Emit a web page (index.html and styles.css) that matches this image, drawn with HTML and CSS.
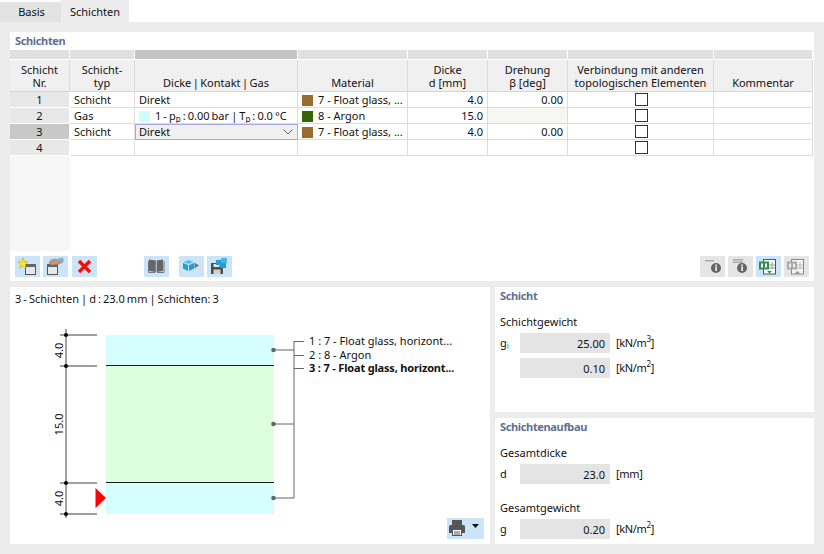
FILE: index.html
```html
<!DOCTYPE html>
<html lang="de">
<head>
<meta charset="utf-8">
<title>Schichten</title>
<link rel="stylesheet" href="styles.css">
</head>
<body>
<nav class="tabs">
  <div class="tab">Basis</div>
  <div class="tab active">Schichten</div>
</nav>
<main class="content">
  <section class="panel top">
    <h2 class="title">Schichten</h2>
    <div class="table-area">
      <table class="grid">
        <colgroup>
          <col class="c1"><col class="c2"><col class="c3"><col class="c4"><col class="c5"><col class="c6"><col class="c7"><col class="c8">
        </colgroup>
        <tr class="strip">
          <td></td><td></td><td class="dark"></td><td></td><td></td><td></td><td></td><td></td>
        </tr>
        <tr class="head">
          <th>Schicht<br>Nr.</th>
          <th>Schicht-<br>typ</th>
          <th class="tight">Dicke | Kontakt | Gas</th>
          <th>Material</th>
          <th>Dicke<br>d [mm]</th>
          <th>Drehung<br>β [deg]</th>
          <th>Verbindung mit anderen<br>topologischen Elementen</th>
          <th>Kommentar</th>
        </tr>
        <tr>
          <td class="nr">1</td><td class="txt">Schicht</td><td class="txt">Direkt</td>
          <td class="txt"><span class="swatch brown"></span>7 - Float glass, ...</td>
          <td class="num">4.0</td><td class="num">0.00</td>
          <td class="chk"><span class="box"></span></td><td></td>
        </tr>
        <tr>
          <td class="nr">2</td><td class="txt">Gas</td>
          <td class="txt tight"><span class="swatch cyan"></span>1 - p<sub>p</sub> : 0.00 bar | T<sub>p</sub> : 0.0 °C</td>
          <td class="txt"><span class="swatch green"></span>8 - Argon</td>
          <td class="num">15.0</td><td class="na"></td>
          <td class="chk"><span class="box"></span></td><td></td>
        </tr>
        <tr>
          <td class="nr sel">3</td><td class="txt">Schicht</td>
          <td class="txt combo"><span>Direkt</span>
            <svg class="chev" width="10" height="6" viewBox="0 0 10 6"><path d="M0.5 0.5 5 5 9.500 0.5" fill="none" stroke="#666"/></svg>
          </td>
          <td class="txt"><span class="swatch brown"></span>7 - Float glass, ...</td>
          <td class="num">4.0</td><td class="num">0.00</td>
          <td class="chk"><span class="box"></span></td><td></td>
        </tr>
        <tr>
          <td class="nr">4</td><td></td><td></td><td></td><td></td><td></td>
          <td class="chk"><span class="box"></span></td><td></td>
        </tr>
      </table>
      <div class="rest"><div class="rest-nr"></div></div>
    </div>
    <div class="toolbar">
      <button class="tb"><svg width="25" height="21" viewBox="0 0 25 21"><rect x="10.500" y="9.500" width="10" height="9" fill="#e8e8e8" stroke="#555"/><rect x="10" y="8" width="11" height="3" fill="#666"/><path d="M8 2 9.400 5.600 13 6 10.300 8.300 11.200 12 8 10 4.800 12 5.700 8.300 3 6 6.600 5.600Z" fill="#ffe81a" stroke="#a89a10" stroke-width=".5"/></svg></button>
      <button class="tb"><svg width="25" height="21" viewBox="0 0 25 21"><rect x="4.500" y="8.500" width="10" height="10" fill="#e8e8e8" stroke="#555"/><rect x="4" y="8" width="11" height="3" fill="#666"/><path d="M6 7 8 4 12 3 17 4 20 6 16 8 11 9 8 9Z" fill="#c09a80" stroke="#8c6f5c" stroke-width=".5"/><path d="M15 2.500 20 1.500 21 5 17 5.500Z" fill="#7fb0d0"/></svg></button>
      <button class="tb gap-del"><svg width="25" height="21" viewBox="0 0 25 21"><path d="M7 5 18 16M18 5 7 16" stroke="#ee1111" stroke-width="3.400" fill="none"/></svg></button>
      <button class="tb gap-book"><svg width="25" height="21" viewBox="0 0 25 21"><path d="M5 3.500 11.800 4.500V16L5 15ZM19 3.500 12.700 4.500V16L19 15Z" fill="#666"/><path d="M4.500 5V16.500H11.500M20 5V16.500H13" fill="none" stroke="#777"/></svg></button>
      <button class="tb gap-cube"><svg width="25" height="21" viewBox="0 0 25 21"><path d="M4 7 9 9V15L4 12.500ZM10 9 15 7V12.500L10 15Z" fill="#1f9fd8"/><path d="M4.500 6 9.500 4 14.500 6 9.500 8Z" fill="#5cc0e8"/><path d="M15.500 6.500 20 9.500 15.500 12.500Z" fill="#777"/></svg></button>
      <button class="tb"><svg width="25" height="21" viewBox="0 0 25 21"><path d="M4 7H14L16 9V18H4Z" fill="#4d4d4d"/><rect x="6.500" y="8" width="6" height="3" fill="#e8e8e8"/><rect x="6.500" y="13.500" width="7" height="4.500" fill="#cfcfcf"/><rect x="9" y="4" width="6" height="5" fill="#1f9fd8"/><rect x="14" y="2" width="6" height="5" fill="#4db4e2"/><rect x="13" y="7" width="6" height="5" fill="#1f9fd8"/></svg></button>
      <span class="spacer"></span>
      <button class="tb off"><svg width="25" height="21" viewBox="0 0 25 21"><rect x="5" y="4" width="9" height="1.500" fill="#aaa"/><circle cx="16" cy="12" r="5" fill="#666"/><rect x="15.200" y="10.500" width="1.800" height="4.500" fill="#e5e5e5"/><rect x="15.200" y="8.500" width="1.800" height="1.500" fill="#e5e5e5"/></svg></button>
      <button class="tb off"><svg width="25" height="21" viewBox="0 0 25 21"><rect x="5" y="3" width="10" height="1.500" fill="#aaa"/><rect x="5" y="5.500" width="10" height="1.500" fill="#aaa"/><circle cx="14" cy="12" r="5" fill="#666"/><rect x="13.200" y="10.500" width="1.800" height="4.500" fill="#e5e5e5"/><rect x="13.200" y="8.500" width="1.800" height="1.500" fill="#e5e5e5"/></svg></button>
      <button class="tb"><svg width="25" height="21" viewBox="0 0 25 21"><rect x="7.500" y="3.500" width="12" height="14.500" fill="#fff" stroke="#555"/><path d="M13 9H19M13 12H19M16 6V13" stroke="#999" fill="none"/><rect x="3" y="5.500" width="10" height="8" fill="#2f8f4f"/><rect x="5" y="7.500" width="2" height="4" fill="#fff"/><rect x="9" y="7.500" width="2" height="4" fill="#fff"/><path d="M11 15h5l-2.500 2.500Z" fill="#2f8f4f"/></svg></button>
      <button class="tb off"><svg width="25" height="21" viewBox="0 0 25 21"><rect x="7.500" y="3.500" width="12" height="14.500" fill="#f4f4f4" stroke="#888"/><path d="M13 9H19M13 12H19M16 6V13" stroke="#bbb" fill="none"/><rect x="3" y="5.500" width="10" height="8" fill="#aaa"/><rect x="5" y="7.500" width="2" height="4" fill="#eee"/><rect x="9" y="7.500" width="2" height="4" fill="#eee"/><path d="M11 17.500h5l-2.500-2.500Z" fill="#888"/></svg></button>
    </div>
  </section>
  <div class="bottom">
    <section class="panel diagram">
      <p class="caption">3 - Schichten | d : 23.0 mm | Schichten: 3</p>
      <svg class="drawing" width="480" height="208" viewBox="0 310 480 208">
        <rect x="96" y="335" width="168" height="31" fill="#d5ffff"/>
        <rect x="96" y="366" width="168" height="117" fill="#ddffdd"/>
        <rect x="96" y="483" width="168" height="31" fill="#d5ffff"/>
        <path d="M96 365.500H264M96 482.500H264" stroke="#1a1a1a" fill="none"/>
        <path d="M56 329V518" stroke="#808080" stroke-width="1.500" fill="none"/>
        <path d="M50 335H87M50 366H87M50 483H87M50 514H87" stroke="#808080" stroke-width="1.500" fill="none"/>
        <g fill="#000">
          <circle cx="56" cy="335" r="2"/><circle cx="56" cy="366" r="2"/><circle cx="56" cy="483" r="2"/><circle cx="56" cy="514" r="2"/>
        </g>
        <path d="M85.500 488 96 498 85.500 508Z" fill="#ff0000"/>
        <path d="M264 350H284M264 424H284M264 498H284M284 341V498M284 341.500H294M284 355.500H294M284 368.500H294" stroke="#666" fill="none"/>
        <g fill="#666"><circle cx="263.500" cy="350" r="2.300"/><circle cx="263.500" cy="424" r="2.300"/><circle cx="263.500" cy="498" r="2.300"/></g>
        <g class="dim">
          <text transform="translate(52.500 350.500) rotate(-90)">4.0</text>
          <text transform="translate(52.500 424.500) rotate(-90)">15.0</text>
          <text transform="translate(52.500 498.500) rotate(-90)">4.0</text>
        </g>
        <g class="legend">
          <text x="299" y="345">1 : 7 - Float glass, horizont...</text>
          <text x="299" y="359">2 : 8 - Argon</text>
          <text x="299" y="372" class="bold">3 : 7 - Float glass, horizont...</text>
        </g>
      </svg>
      <div class="print-row">
        <button class="print"><svg width="37" height="21" viewBox="0 0 37 21"><rect x="5" y="2" width="10" height="5" fill="#555"/><path d="M2 8.500Q2 7 3.500 7H16.500Q18 7 18 8.500V15H15V12H5V15H2Z" fill="#555"/><rect x="5.500" y="11.500" width="9" height="6" fill="#fff" stroke="#555"/><path d="M7 14h6M7 16h6" stroke="#555"/><path d="M25 6h7l-3.500 4Z" fill="#111"/></svg></button>
      </div>
    </section>
    <div class="side">
      <section class="panel info first-panel">
        <h2 class="title">Schicht</h2>
        <h3 class="label first">Schichtgewicht</h3>
        <div class="row"><span class="sym">g<sub class="blue">i</sub></span><output class="val">25.00</output><span class="unit">[kN/m<sup>3</sup>]</span></div>
        <div class="row next"><span class="sym"></span><output class="val">0.10</output><span class="unit">[kN/m<sup>2</sup>]</span></div>
      </section>
      <section class="panel info second-panel">
        <h2 class="title">Schichtenaufbau</h2>
        <h3 class="label first">Gesamtdicke</h3>
        <div class="row"><span class="sym">d</span><output class="val">23.0</output><span class="unit">[mm]</span></div>
        <h3 class="label second">Gesamtgewicht</h3>
        <div class="row"><span class="sym">g</span><output class="val">0.20</output><span class="unit">[kN/m<sup>2</sup>]</span></div>
      </section>
    </div>
  </div>
</main>
</body>
</html>
```
FILE: styles.css
```css
* { box-sizing: border-box; }
html, body { margin: 0; height: 100%; }
body {
  width: 824px;
  height: 554px;
  overflow: hidden;
  background: #ececec;
  color: #111;
  font: 11px/14px "Noto Sans", sans-serif;
}
.tabs {
  display: flex;
  align-items: flex-end;
  height: 22px;
  background: #fff;
}
.tab {
  width: 61px;
  height: 20px;
  padding: 3px 0 0 2px;
  text-align: center;
  background: #e3e3e3;
}
.tab.active {
  width: 68px;
  height: 22px;
  padding: 5px 0 0;
  background: #ececec;
}
.content {
  display: flex;
  flex-direction: column;
  gap: 6px;
  padding: 10px 10px 0;
}
.panel { background: #fff; }
.top {
  display: flex;
  flex-direction: column;
  height: 249px;
}
.title {
  margin: 0;
  height: 18px;
  padding: 2px 0 0 5px;
  font-size: 11px;
  line-height: 14px;
  font-weight: 700;
  letter-spacing: -0.35px;
  color: #5f6f93;
}
.table-area {
  display: flex;
  flex-direction: column;
  height: 201px;
}
.grid {
  width: 803px;
  table-layout: fixed;
  border-collapse: separate;
  border-spacing: 0;
}
.c1 { width: 60px; }
.c2 { width: 65px; }
.c3 { width: 163px; }
.c4 { width: 110px; }
.c5 { width: 80px; }
.c6 { width: 80px; }
.c7 { width: 146px; }
.c8 { width: 99px; }
.grid td, .grid th {
  padding: 0;
  height: 16px;
  border-right: 1px solid #dcdcdc;
  border-bottom: 1px solid #dcdcdc;
  font-weight: 400;
  line-height: 14px;
  white-space: nowrap;
  overflow: hidden;
}
.grid .strip td {
  height: 10px;
  background: #e0e0e0;
  border-right: 1px solid #fff;
  border-bottom: 1px solid #fff;
}
.grid .strip td.dark { background: #c4c4c4; }
.grid .head th {
  height: 32px;
  padding-bottom: 2px;
  background: #f0f0f0;
  text-align: center;
  vertical-align: bottom;
  line-height: 13px;
  border-bottom: 1px solid #d4d4d4;
}
.grid .tight { word-spacing: -0.8px; }
.grid .head th.tight { word-spacing: -1.4px; }
.grid td.nr { background: #e8e8e8; text-align: center; border-color: #fff; }
.grid td.nr.sel { background: #c8c8c8; }
.grid td.txt { padding-left: 4px; }
.grid td.num { padding-right: 4px; text-align: right; }
.grid td.na { background: #f7f7f2; }
.grid td.chk { padding-left: 2px; text-align: center; }
.box {
  display: block;
  width: 13px;
  height: 13px;
  margin: 0 auto;
  border: 1px solid #333;
  background: #fff;
}
.swatch {
  display: inline-block;
  width: 11px;
  height: 11px;
  margin-right: 5px;
  vertical-align: -2px;
}
.brown { background: #996b2e; }
.green { background: #336600; }
.cyan { background: #ccffff; }
sub, sup { font-size: 8px; line-height: 0; }
sub { vertical-align: -2px; }
.blue { color: #2a7fc0; }
.grid td.combo {
  position: relative;
  background: #f0f0f0;
  border: 1px solid #a9a9e6;
  padding-left: 3px;
}
.chev { position: absolute; right: 4px; top: 4px; }
.rest { flex: 1; }
.rest-nr { width: 60px; height: 100%; background: #f7f7f7; }
.toolbar {
  display: flex;
  gap: 3px;
  padding: 5px 5px 0;
}
.tb, .print {
  display: block;
  width: 25px;
  height: 21px;
  padding: 0;
  border: 0;
  background: #cce4f7;
}
.tb svg, .print svg { display: block; }
.tb.off { background: #e5e5e5; }
.gap-del { margin-left: 1px; }
.gap-book { margin-left: 44px; }
.gap-cube { margin-left: 7px; }
.spacer { flex: 1; }
.bottom {
  display: flex;
  gap: 5px;
  height: 257px;
}
.diagram {
  display: flex;
  flex-direction: column;
  width: 480px;
}
.caption {
  margin: 0;
  height: 23px;
  padding: 5px 0 0 5px;
  word-spacing: -0.8px;
}
.drawing { display: block; }
.drawing text { font-family: "Noto Sans", sans-serif; font-size: 11px; fill: #111; }
.dim text { text-anchor: middle; }
.legend .bold { font-weight: 700; letter-spacing: -0.17px; }
.print-row {
  display: flex;
  justify-content: flex-end;
  padding-right: 6px;
}
.print { width: 37px; }
.side {
  display: flex;
  flex-direction: column;
  gap: 6px;
  width: 319px;
}
.info { padding-top: 2px; }
.first-panel { height: 125px; }
.second-panel { height: 126px; }
.info .title { height: 14px; padding-top: 0; }
.label {
  margin: 0;
  padding-left: 5px;
  font-size: 11px;
  line-height: 14px;
  font-weight: 400;
}
.label.first { margin-top: 12px; }
.label.second { margin-top: 17px; }
.row {
  display: flex;
  align-items: center;
  height: 20px;
  margin-top: 4px;
}
.row.next { margin-top: 5px; }
.sym { width: 25px; padding-left: 5px; }
.val {
  width: 90px;
  height: 20px;
  padding-right: 5px;
  line-height: 21px;
  text-align: right;
  background: #e4e4e4;
}
.unit { margin-left: 6px; letter-spacing: -0.35px; }
```
